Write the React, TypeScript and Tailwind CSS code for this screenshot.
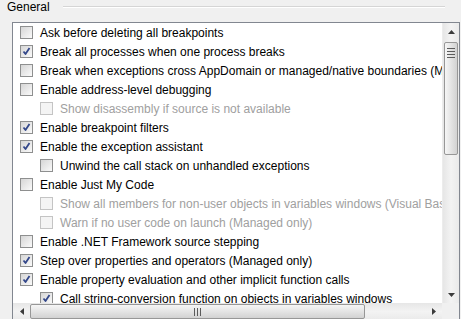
import React from 'react';

type Item = { label: string; checked: boolean; indent: boolean; disabled: boolean };

const items: Item[] = [
  { label: 'Ask before deleting all breakpoints', checked: false, indent: false, disabled: false },
  { label: 'Break all processes when one process breaks', checked: true, indent: false, disabled: false },
  { label: 'Break when exceptions cross AppDomain or managed/native boundaries (Managed only)', checked: false, indent: false, disabled: false },
  { label: 'Enable address-level debugging', checked: false, indent: false, disabled: false },
  { label: 'Show disassembly if source is not available', checked: false, indent: true, disabled: true },
  { label: 'Enable breakpoint filters', checked: true, indent: false, disabled: false },
  { label: 'Enable the exception assistant', checked: true, indent: false, disabled: false },
  { label: 'Unwind the call stack on unhandled exceptions', checked: false, indent: true, disabled: false },
  { label: 'Enable Just My Code', checked: false, indent: false, disabled: false },
  { label: 'Show all members for non-user objects in variables windows (Visual Basic only)', checked: false, indent: true, disabled: true },
  { label: 'Warn if no user code on launch (Managed only)', checked: false, indent: true, disabled: true },
  { label: 'Enable .NET Framework source stepping', checked: false, indent: false, disabled: false },
  { label: 'Step over properties and operators (Managed only)', checked: true, indent: false, disabled: false },
  { label: 'Enable property evaluation and other implicit function calls', checked: true, indent: false, disabled: false },
  { label: 'Call string-conversion function on objects in variables windows', checked: true, indent: true, disabled: false },
];

const Checkbox: React.FC<{ checked: boolean; disabled: boolean }> = ({ checked, disabled }) => (
  <span
    className={
      disabled
        ? 'w-[13px] h-[13px] shrink-0 border border-[#c4c4c4] bg-[#f4f4f4] flex items-center justify-center'
        : 'w-[13px] h-[13px] shrink-0 border border-[#8e8f8f] bg-gradient-to-br from-[#d6d6d6] to-[#fafafa] flex items-center justify-center'
    }
  >
    {checked && (
      <svg width="11" height="11" viewBox="0 0 11 11" className="shrink-0">
        <path d="M2.5 5.5 L4.5 8 L8.5 2" fill="none" stroke="#33478a" strokeWidth="1.8" strokeLinejoin="round" />
      </svg>
    )}
  </span>
);

const Arrow: React.FC<{ dir: 'up' | 'down' | 'left' | 'right' }> = ({ dir }) => {
  const pts = {
    up: '0,4 3.5,0 7,4',
    down: '0,0 3.5,4 7,0',
    left: '4,0 0,3.5 4,7',
    right: '0,0 4,3.5 0,7',
  }[dir];
  const w = dir === 'up' || dir === 'down' ? 7 : 4;
  const h = dir === 'up' || dir === 'down' ? 4 : 7;
  return (
    <svg width={w} height={h} viewBox={`0 0 ${w} ${h}`}>
      <polygon points={pts} fill="#3c3c3c" />
    </svg>
  );
};

export default function App() {
  return (
    <div className="w-[461px] h-[319px] overflow-hidden bg-[#f0f0f0] font-['Liberation_Sans',sans-serif] text-[12px] text-black">
      <div className="flex h-[15px] pl-[7px] pr-[16px]">
        <span className="leading-[15px]">General</span>
        <div className="flex-1 ml-[13px] mt-[6px] h-[2px] border-t border-[#d5d5d5] border-b border-b-white" />
      </div>
      <div className="ml-[12px] mt-[7px] w-[448px] h-[299px] border border-[#828790] bg-white flex flex-col">
        <div className="flex h-[280px]">
          <div className="flex-1 overflow-hidden">
            {items.map(it => (
              <div
                key={it.label}
                className={
                  it.indent
                    ? 'h-[19px] flex items-center pl-[27px] whitespace-nowrap'
                    : 'h-[19px] flex items-center pl-[7px] whitespace-nowrap'
                }
              >
                <Checkbox checked={it.checked} disabled={it.disabled} />
                <span className={it.disabled ? 'ml-[7px] text-[#a0a0a0]' : 'ml-[7px]'}>{it.label}</span>
              </div>
            ))}
          </div>
          <div className="w-[17px] shrink-0 flex flex-col bg-gradient-to-r from-[#e6e6e6] via-[#f3f3f3] to-[#eaeaea] border-l border-[#ececec]">
            <div className="h-[17px] flex items-center justify-center">
              <Arrow dir="up" />
            </div>
            <div className="mx-[1px] mt-[2px] h-[113px] rounded-[2px] border border-[#979797] bg-gradient-to-r from-[#f6f6f6] via-[#e4e4e4] to-[#d2d2d2] flex flex-col items-center pt-[5px] gap-[2px]">
              <span className="w-[8px] h-[1px] bg-[#5b5b5b]" />
              <span className="w-[8px] h-[1px] bg-[#5b5b5b]" />
              <span className="w-[8px] h-[1px] bg-[#5b5b5b]" />
              <span className="w-[8px] h-[1px] bg-[#5b5b5b]" />
            </div>
            <div className="flex-1" />
            <div className="h-[17px] flex items-center justify-center">
              <Arrow dir="down" />
            </div>
          </div>
        </div>
        <div className="flex h-[17px] shrink-0">
          <div className="flex-1 flex bg-gradient-to-b from-[#e6e6e6] via-[#f3f3f3] to-[#eaeaea]">
            <div className="w-[17px] flex items-center justify-center">
              <Arrow dir="left" />
            </div>
            <div className="w-[335px] my-[1px] rounded-[2px] border border-[#979797] bg-gradient-to-b from-[#f6f6f6] via-[#e4e4e4] to-[#d2d2d2] flex items-center justify-center gap-[2px]">
              <span className="w-[1px] h-[8px] bg-[#5b5b5b]" />
              <span className="w-[1px] h-[8px] bg-[#5b5b5b]" />
              <span className="w-[1px] h-[8px] bg-[#5b5b5b]" />
            </div>
            <div className="flex-1" />
            <div className="w-[17px] flex items-center justify-center">
              <Arrow dir="right" />
            </div>
          </div>
          <div className="w-[17px] bg-[#f0f0f0]" />
        </div>
      </div>
    </div>
  );
}
